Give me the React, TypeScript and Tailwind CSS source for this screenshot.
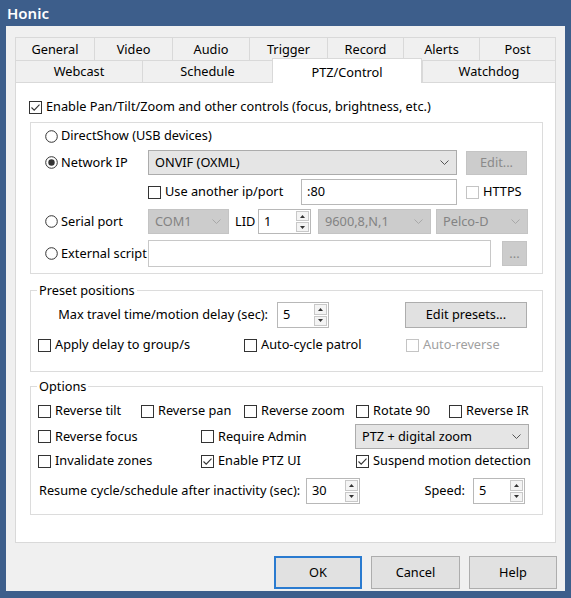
import React from "react";

const FONT = { fontFamily: '"Noto Sans", "Open Sans", sans-serif' };

function Box({ checked, disabled }: { checked?: boolean; disabled?: boolean }) {
  return (
    <svg width="13" height="13" viewBox="0 0 13 13" className="shrink-0">
      <rect x="0.5" y="0.5" width="12" height="12" fill="#fff" stroke={disabled ? "#c4c4c4" : "#333"} />
      {checked && <path d="M2.5 6.5 L5.2 9.2 L10.5 3.6" fill="none" stroke="#333" strokeWidth="1.1" />}
    </svg>
  );
}

function Check({ label, checked, disabled, w, dimText }: { label: string; checked?: boolean; disabled?: boolean; w?: string; dimText?: boolean }) {
  return (
    <div className={`flex items-center gap-[4px] ${w ?? ""}`}>
      <Box checked={checked} disabled={disabled} />
      <span className={`whitespace-nowrap ${dimText ? "text-[#a0a0a0]" : "text-black"}`}>{label}</span>
    </div>
  );
}

function Radio({ label, checked }: { label: string; checked?: boolean }) {
  return (
    <div className="flex items-center gap-[3px] w-[103px] shrink-0">
      <svg width="13" height="13" viewBox="0 0 13 13" className="shrink-0">
        <circle cx="6.5" cy="6.5" r="5.8" fill="#fff" stroke="#333" />
        {checked && <circle cx="6.5" cy="6.5" r="3.2" fill="#333" />}
      </svg>
      <span className="whitespace-nowrap">{label}</span>
    </div>
  );
}

function Chevron({ color }: { color: string }) {
  return (
    <svg width="9" height="5" viewBox="0 0 9 5" className="shrink-0">
      <path d="M0.5 0.5 L4.5 4.5 L8.5 0.5" fill="none" stroke={color} strokeWidth="1" />
    </svg>
  );
}

function Select({ value, w, h, disabled }: { value: string; w: string; h: string; disabled?: boolean }) {
  return (
    <div
      className={`${w} ${h} shrink-0 flex items-center justify-between pl-[6px] pr-[7px] border ${
        disabled ? "bg-[#cccccc] border-[#c4c4c4] text-[#838383]" : "bg-[#e5e5e5] border-[#acacac] text-black"
      }`}
    >
      <span className="whitespace-nowrap">{value}</span>
      <Chevron color={disabled ? "#a8a8a8" : "#555"} />
    </div>
  );
}

function Spin({ value, w, h }: { value: string; w: string; h: string }) {
  return (
    <div className={`${w} ${h} shrink-0 flex border border-[#b8b8b8] bg-white`}>
      <span className="flex-1 pl-[5px] flex items-center">{value}</span>
      <div className="w-[14px] flex flex-col py-[1px] pr-[1px] gap-[1px]">
        <div className="flex-1 border border-[#c8c8c8] bg-[#f4f4f4] flex items-center justify-center">
          <svg width="5" height="3" viewBox="0 0 5 3"><path d="M0 3 L2.5 0 L5 3 Z" fill="#333" /></svg>
        </div>
        <div className="flex-1 border border-[#c8c8c8] bg-[#f4f4f4] flex items-center justify-center">
          <svg width="5" height="3" viewBox="0 0 5 3"><path d="M0 0 L2.5 3 L5 0 Z" fill="#333" /></svg>
        </div>
      </div>
    </div>
  );
}

function Btn({ label, w, h, disabled, focus }: { label: string; w: string; h: string; disabled?: boolean; focus?: boolean }) {
  return (
    <div
      className={`${w} ${h} shrink-0 flex items-center justify-center ${
        focus
          ? "border-2 border-[#2a7bd0] bg-[#e1e1e1]"
          : disabled
          ? "border border-[#c4c4c4] bg-[#cccccc] text-[#8a8a8a]"
          : "border border-[#adadad] bg-[#e1e1e1]"
      }`}
    >
      {label}
    </div>
  );
}

function Tab({ label, w, last }: { label: string; w: string; last?: boolean }) {
  return (
    <div
      className={`${w} h-full shrink-0 flex items-center justify-center pt-[1px] border-t border-l border-[#d9d9d9] bg-[#f0f0f0] ${
        last ? "border-r" : ""
      }`}
    >
      {label}
    </div>
  );
}

export default function App() {
  return (
    <div className="w-[571px] h-[598px] bg-[#3d5e8b] flex flex-col text-[12.75px] text-black overflow-hidden" style={FONT}>
      <div className="h-[26px] pl-[7px] flex items-center text-white text-[15px] font-semibold">Honic</div>
      <div className="ml-[6px] w-[559px] h-[565px] bg-[#f0f0f0] flex flex-col">
        <div className="ml-[9px] mt-[11px] w-[541px] flex flex-col">
          <div className="h-[23px] flex">
            <Tab label="General" w="w-[79px]" />
            <Tab label="Video" w="w-[78px]" />
            <Tab label="Audio" w="w-[77px]" />
            <Tab label="Trigger" w="w-[78px]" />
            <Tab label="Record" w="w-[76px]" />
            <Tab label="Alerts" w="w-[76px]" />
            <Tab label="Post" w="w-[77px]" last />
          </div>
          <div className="h-[22px] flex">
            <Tab label="Webcast" w="w-[127px]" />
            <Tab label="Schedule" w="w-[130px]" />
            <div className="relative z-10 w-[150px] h-[25px] -mt-[2px] shrink-0 flex items-start pt-[4px] justify-center border-t border-l border-r border-[#d9d9d9] bg-white">
              PTZ/Control
            </div>
            <Tab label="Watchdog" w="w-[134px]" last />
          </div>
          <div className="h-[461px] border border-[#d9d9d9] bg-white flex flex-col">
            <div className="ml-[13px] mt-[13px] h-[22px] flex items-center">
              <Check label="Enable Pan/Tilt/Zoom and other controls (focus, brightness, etc.)" checked />
            </div>
            {/* Group 1 */}
            <div className="ml-[14px] mt-[4px] w-[513px] h-[152px] border border-[#dcdcdc] flex flex-col pl-[14px]">
              <div className="mt-[1px] h-[24px] flex items-center">
                <Radio label="DirectShow (USB devices)" />
              </div>
              <div className="mt-[2px] h-[25px] flex items-center">
                <Radio label="Network IP" checked />
                <Select value="ONVIF (OXML)" w="w-[309px]" h="h-[25px]" />
                <Btn label="Edit..." w="w-[61px] ml-[9px]" h="h-[24px]" disabled />
              </div>
              <div className="mt-[4px] h-[26px] flex items-center">
                <div className="w-[103px] shrink-0" />
                <Check label="Use another ip/port" w="w-[153px] shrink-0" />
                <div className="w-[156px] h-[26px] shrink-0 border border-[#b8b8b8] bg-white flex items-center pl-[5px]">:80</div>
                <div className="ml-[9px]">
                  <Check label="HTTPS" disabled />
                </div>
              </div>
              <div className="mt-[4px] h-[25px] flex items-center">
                <Radio label="Serial port" />
                <Select value="COM1" w="w-[81px]" h="h-[25px]" disabled />
                <span className="ml-[6px] w-[23px] shrink-0">LID</span>
                <Spin value="1" w="w-[53px]" h="h-[25px]" />
                <div className="ml-[7px]">
                  <Select value="9600,8,N,1" w="w-[113px]" h="h-[25px]" disabled />
                </div>
                <div className="ml-[5px]">
                  <Select value="Pelco-D" w="w-[92px]" h="h-[25px]" disabled />
                </div>
              </div>
              <div className="mt-[6px] h-[27px] flex items-center">
                <Radio label="External script" />
                <div className="w-[343px] h-[27px] shrink-0 border border-[#c8c8c8] bg-white" />
                <Btn label="..." w="w-[25px] ml-[11px]" h="h-[25px]" disabled />
              </div>
            </div>
            {/* Preset positions */}
            <fieldset className="ml-[14px] mt-[7px] w-[513px] h-[91px] border border-[#dcdcdc]">
              <legend className="ml-[6px] px-[2px] leading-[19px]">Preset positions</legend>
              <div className="mt-[2px] h-[26px] flex items-center">
                <div className="w-[246px] shrink-0 text-right pr-[9px]">Max travel time/motion delay (sec):</div>
                <Spin value="5" w="w-[52px]" h="h-[26px]" />
                <Btn label="Edit presets..." w="w-[122px] ml-[76px]" h="h-[26px]" />
              </div>
              <div className="mt-[6px] h-[22px] flex items-center pl-[7px]">
                <Check label="Apply delay to group/s" w="w-[206px] shrink-0" />
                <Check label="Auto-cycle patrol" w="w-[162px] shrink-0" />
                <Check label="Auto-reverse" disabled dimText />
              </div>
            </fieldset>
            {/* Options */}
            <fieldset className="ml-[14px] mt-[5px] w-[513px] h-[138px] border border-[#dcdcdc] pl-[7px]">
              <legend className="ml-[-1px] px-[2px] leading-[19px]">Options</legend>
              <div className="mt-[4px] h-[22px] flex items-center">
                <Check label="Reverse tilt" w="w-[103px] shrink-0" />
                <Check label="Reverse pan" w="w-[103px] shrink-0" />
                <Check label="Reverse zoom" w="w-[112px] shrink-0" />
                <Check label="Rotate 90" w="w-[93px] shrink-0" />
                <Check label="Reverse IR" />
              </div>
              <div className="mt-[2px] h-[25px] flex items-center">
                <Check label="Reverse focus" w="w-[163px] shrink-0" />
                <Check label="Require Admin" w="w-[154px] shrink-0" />
                <Select value="PTZ + digital zoom" w="w-[174px]" h="h-[25px]" />
              </div>
              <div className="mt-[1px] h-[22px] flex items-center">
                <Check label="Invalidate zones" w="w-[163px] shrink-0" />
                <Check label="Enable PTZ UI" checked w="w-[155px] shrink-0" />
                <Check label="Suspend motion detection" checked />
              </div>
              <div className="mt-[6px] h-[26px] flex items-center">
                <div className="w-[268px] shrink-0 pl-[1px] whitespace-nowrap">Resume cycle/schedule after inactivity (sec):</div>
                <Spin value="30" w="w-[54px]" h="h-[26px]" />
                <div className="w-[113px] shrink-0 text-right pr-[8px]">Speed:</div>
                <Spin value="5" w="w-[52px]" h="h-[26px]" />
              </div>
            </fieldset>
          </div>
        </div>
        <div className="mt-[13px] h-[33px] flex justify-end gap-[9px] pr-[8px]">
          <Btn label="OK" w="w-[88px]" h="h-[33px]" focus />
          <Btn label="Cancel" w="w-[89px]" h="h-[33px]" />
          <Btn label="Help" w="w-[88px]" h="h-[33px]" />
        </div>
      </div>
    </div>
  );
}
